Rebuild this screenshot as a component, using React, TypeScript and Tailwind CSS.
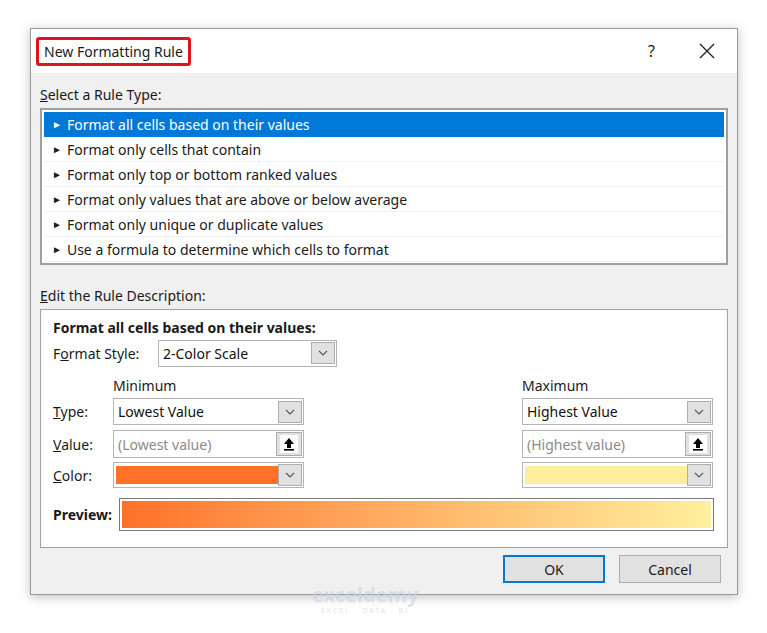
const RULES = [
  'Format all cells based on their values',
  'Format only cells that contain',
  'Format only top or bottom ranked values',
  'Format only values that are above or below average',
  'Format only unique or duplicate values',
  'Use a formula to determine which cells to format',
]

function Chevron() {
  return (
    <svg width="12" height="8" viewBox="0 0 12 8">
      <path d="M2 2l4 4 4-4" fill="none" stroke="#555" strokeWidth="1.1" />
    </svg>
  )
}

function DropBtn() {
  return (
    <div className="w-[24px] h-[22px] mr-[1px] flex items-center justify-center bg-[#e1e1e1] border border-[#adadad]">
      <Chevron />
    </div>
  )
}

function UpBtn() {
  return (
    <div className="w-[26px] h-[24px] mr-[1px] flex items-center justify-center bg-[#e1e1e1] border border-[#adadad]">
      <div className="w-[18px] h-[18px] bg-white flex items-center justify-center">
        <svg width="12" height="14" viewBox="0 0 12 14">
          <path d="M6 1L1 7h3v4h4V7h3z" fill="#000" />
          <rect x="1" y="12" width="10" height="1.6" fill="#000" />
        </svg>
      </div>
    </div>
  )
}

function Select({ text, w }: { text: string; w: string }) {
  return (
    <div className={`${w} h-[27px] bg-white border border-[#b4b4b4] flex items-center justify-between`}>
      <span className="pl-[4px] text-[#111]">{text}</span>
      <DropBtn />
    </div>
  )
}

function ValueBox({ text }: { text: string }) {
  return (
    <div className="w-[191px] h-[28px] bg-white border border-[#b4b4b4] flex items-center justify-between">
      <span className="pl-[4px] text-[#8a8a8a]">{text}</span>
      <UpBtn />
    </div>
  )
}

function ColorBox({ color }: { color: string }) {
  return (
    <div className="w-[191px] h-[26px] bg-white border border-[#b4b4b4] flex items-center justify-between pl-[2px]">
      <div className={`flex-1 h-[18px] ${color}`} />
      <DropBtn />
    </div>
  )
}

export default function App() {
  return (
    <div
      className="w-[767px] h-[633px] bg-white pt-[28px] pl-[30px] text-[14px] text-[#1a1a1a] relative"
      style={{ fontFamily: '"Noto Sans", "Liberation Sans", sans-serif' }}
    >
      <div className="w-[708px] h-[567px] border border-[#9a9a9a] bg-[#f0f0f0] shadow-[0_2px_10px_rgba(0,0,0,0.25)]">
        <div className="h-[44px] bg-white flex items-center pl-[5px] pr-[22px]">
          <div className="h-[29px] px-[5px] flex items-center border-[3px] border-[#e0141e] rounded-[3px] text-[14px]">
            New Formatting Rule
          </div>
          <div className="flex-1" />
          <span className="text-[16px] mr-[44px]">?</span>
          <svg width="16" height="16" viewBox="0 0 16 16">
            <path d="M1 1l14 14M15 1L1 15" stroke="#222" strokeWidth="1.4" />
          </svg>
        </div>

        <div className="pl-[9px] pr-[9px]">
          <div className="mt-[12px] h-[20px] leading-[20px]"><u>S</u>elect a Rule Type:</div>
          <div className="mt-[3px] w-[688px] h-[157px] bg-white border-2 border-[#a0a0a0] px-[2px] pt-[2px]">
            {RULES.map((r, i) => (
              <div
                key={r}
                className={`h-[25px] flex items-center pl-[8px] ${i === 0 ? 'bg-[#0078d7] text-white' : 'border-b border-[#f0f0f0]'}`}
              >
                <span className="text-[10px] mr-[5px]">►</span>
                {r}
              </div>
            ))}
          </div>

          <div className="mt-[21px] h-[20px] leading-[20px]"><u>E</u>dit the Rule Description:</div>
          <div className="mt-[3px] w-[688px] h-[239px] bg-white border border-[#a0a0a0] pl-[12px] pt-[8px]">
            <div className="font-bold h-[20px] leading-[20px]">Format all cells based on their values:</div>
            <div className="flex items-center h-[28px] mt-[1px]">
              <span className="w-[105px]">F<u>o</u>rmat Style:</span>
              <Select text="2-Color Scale" w="w-[179px]" />
            </div>
            <div className="flex mt-[9px] h-[20px] leading-[20px]">
              <span className="ml-[60px] w-[409px]">Minimum</span>
              <span>Maximum</span>
            </div>
            <div className="flex items-center mt-[2px]">
              <span className="w-[60px]"><u>T</u>ype:</span>
              <Select text="Lowest Value" w="w-[191px]" />
              <div className="w-[218px]" />
              <Select text="Highest Value" w="w-[191px]" />
            </div>
            <div className="flex items-center mt-[5px]">
              <span className="w-[60px]"><u>V</u>alue:</span>
              <ValueBox text="(Lowest value)" />
              <div className="w-[218px]" />
              <ValueBox text="(Highest value)" />
            </div>
            <div className="flex items-center mt-[4px]">
              <span className="w-[60px]"><u>C</u>olor:</span>
              <ColorBox color="bg-[#ff7128]" />
              <div className="w-[218px]" />
              <ColorBox color="bg-[#ffef9c]" />
            </div>
            <div className="flex items-center mt-[10px]">
              <span className="w-[66px] font-bold">Preview:</span>
              <div className="w-[595px] h-[33px] border border-[#7a7a7a] bg-white p-[2px]">
                <div className="w-full h-full bg-gradient-to-r from-[#ff7128] to-[#ffef9c]" />
              </div>
            </div>
          </div>

          <div className="flex justify-end gap-[14px] mt-[7px] pr-[7px]">
            <div className="w-[102px] h-[28px] border-2 border-[#0078d7] bg-[#e1e1e1] flex items-center justify-center">OK</div>
            <div className="w-[102px] h-[28px] border border-[#adadad] bg-[#e1e1e1] flex items-center justify-center">Cancel</div>
          </div>
        </div>
      </div>
      <div className="absolute left-[312px] top-[584px] text-[#c8d4e4] opacity-60 flex flex-col items-center">
        <span className="text-[20px] font-bold leading-[22px]">exceldemy</span>
        <span className="text-[7px] tracking-[2px] leading-[9px]">EXCEL · DATA · BI</span>
      </div>
    </div>
  )
}
